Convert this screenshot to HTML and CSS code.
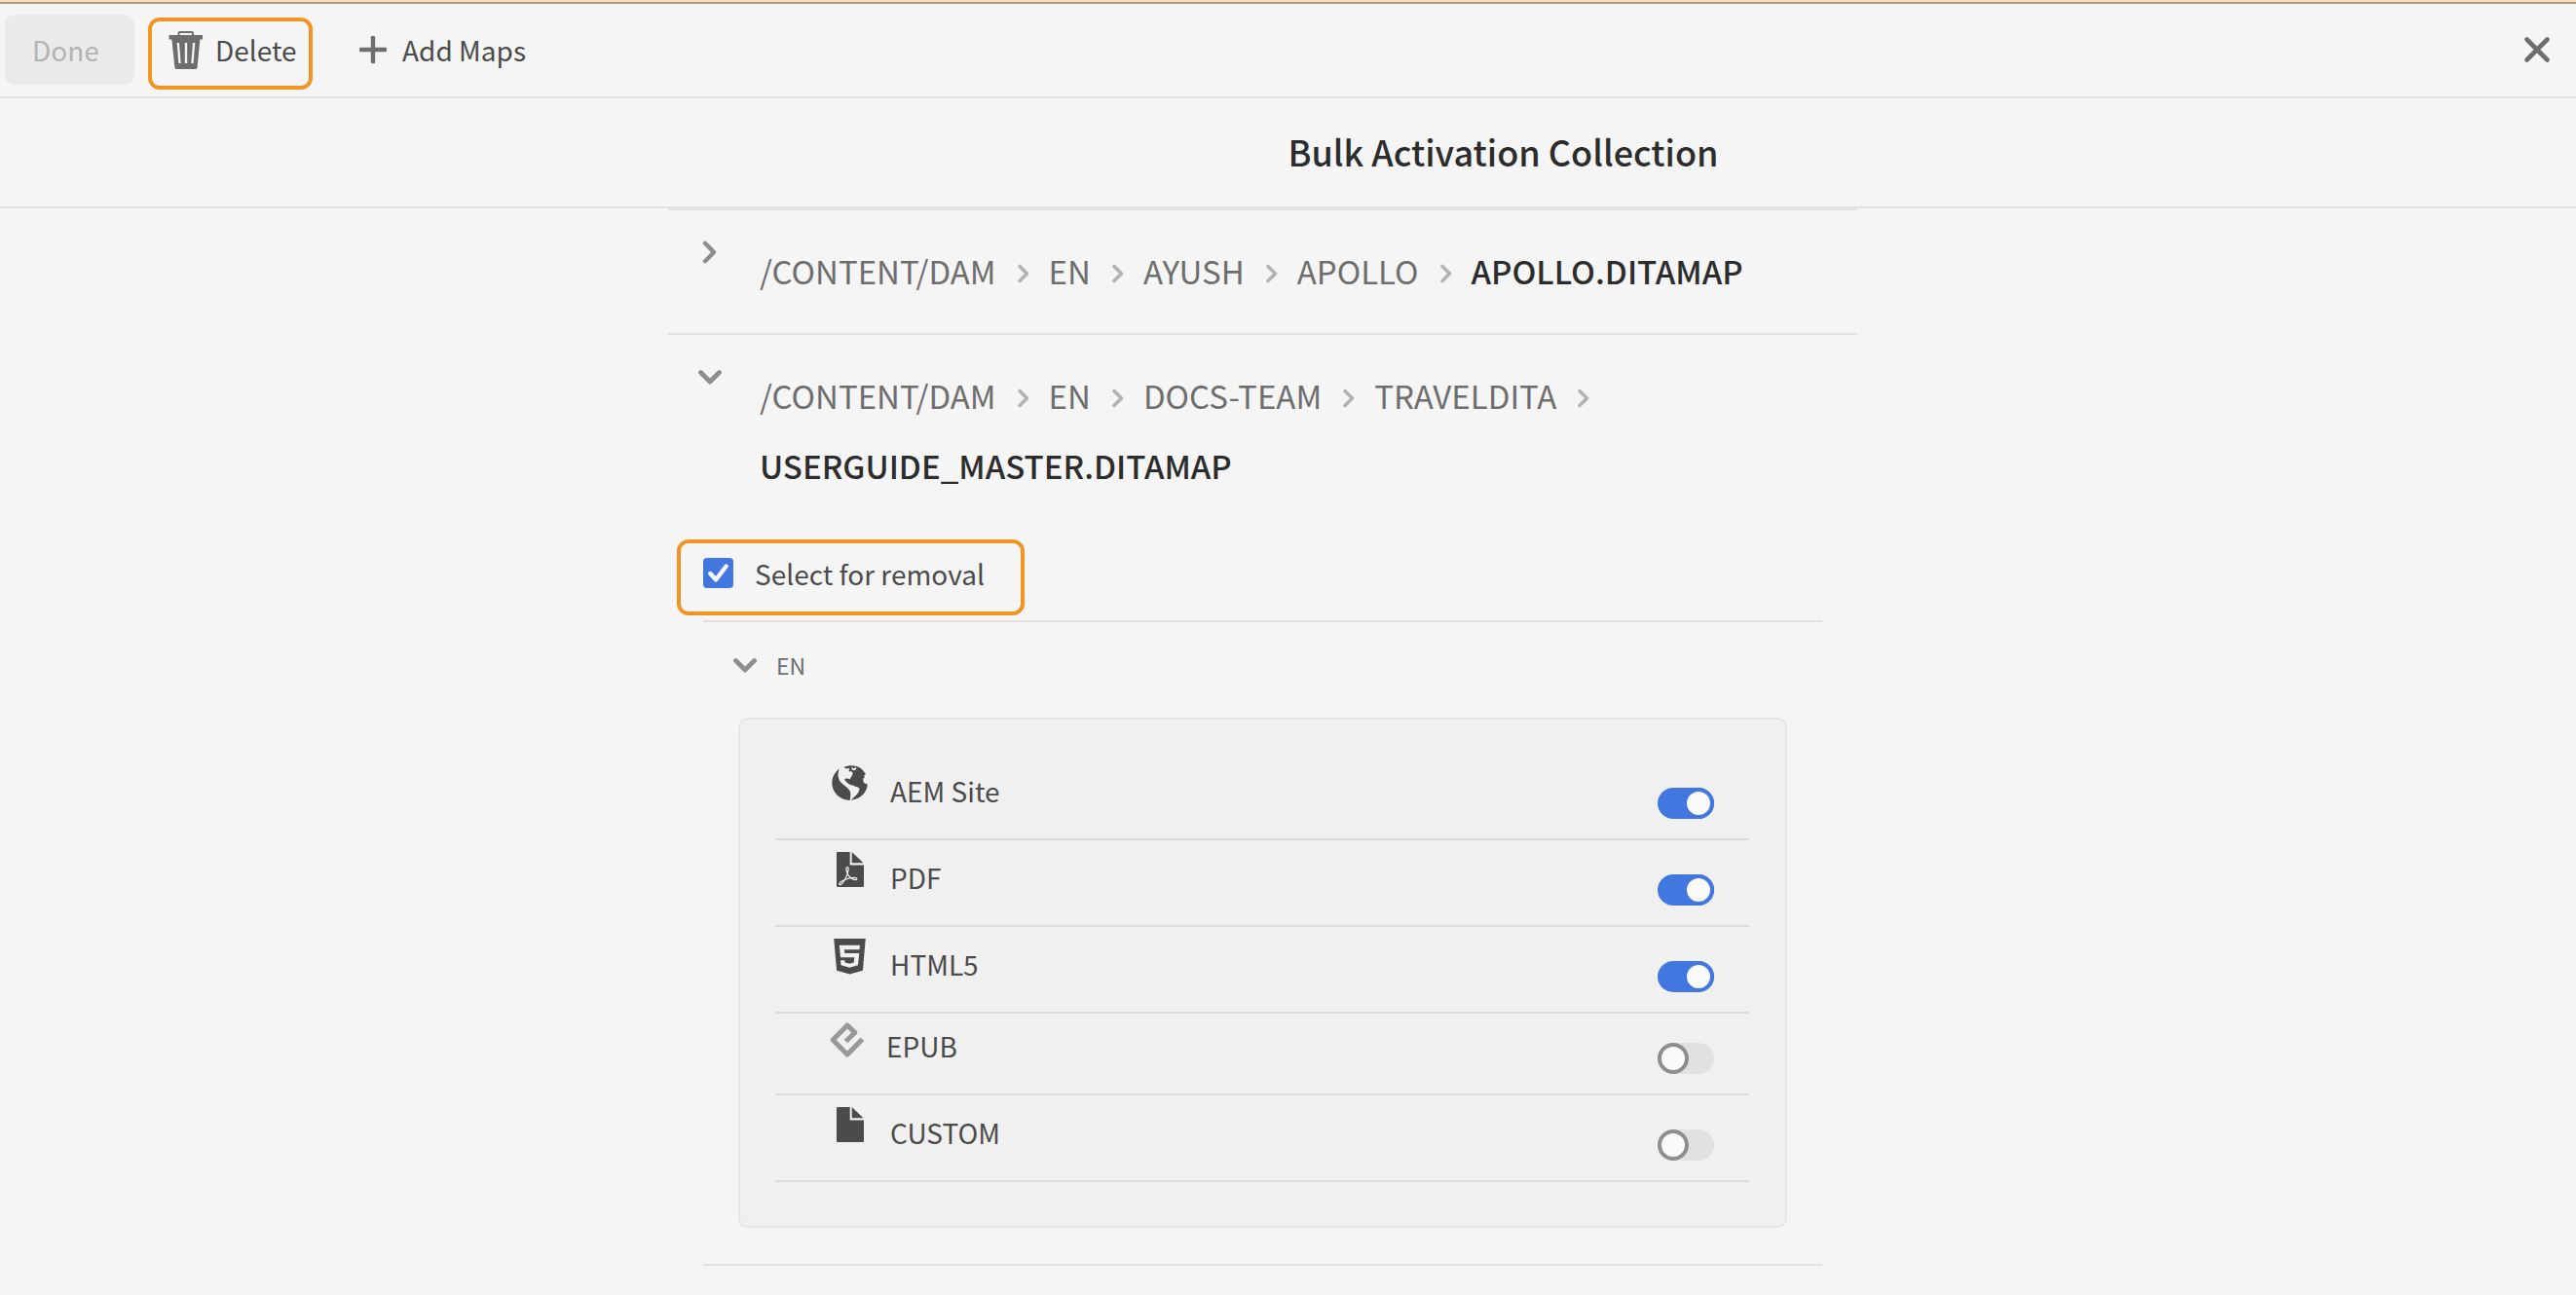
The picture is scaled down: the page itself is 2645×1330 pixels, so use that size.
FILE: index.html
```html
<!DOCTYPE html>
<html lang="en">
<head>
<meta charset="utf-8">
<title>Bulk Activation Collection</title>
<meta name="viewport" content="width=device-width, initial-scale=1">
<link rel="stylesheet" href="styles.css">
</head>
<body>
<svg class="sprite" aria-hidden="true">
  <symbol id="chevron-right" viewBox="0 0 24 24"><path d="M7 2.800L16 12L7 21.200" fill="none" stroke="currentColor" stroke-width="4.400" stroke-linecap="round" stroke-linejoin="round"/></symbol>
  <symbol id="chevron-down" viewBox="0 0 24 24"><path d="M2.500 7.500L12 17L21.500 7.500" fill="none" stroke="currentColor" stroke-width="4.800" stroke-linecap="round" stroke-linejoin="round"/></symbol>
  <symbol id="crumb-arrow" viewBox="0 0 12 20"><path d="M2 2.500L9.500 10L2 17.500" fill="none" stroke="currentColor" stroke-width="3.600" stroke-linecap="round" stroke-linejoin="round"/></symbol>
</svg>

<header class="toolbar">
  <button class="btn btn-done" type="button" disabled>Done</button>
  <button class="btn btn-delete" type="button">
    <svg class="icon-trash" viewBox="0 0 36 40" aria-hidden="true"><path d="M10.500 6V3.200Q10.500 2 11.700 2H23.800Q25 2 25 3.200V6" fill="none" stroke="currentColor" stroke-width="2"/><path fill="currentColor" fill-rule="evenodd" d="M0.500 5H35V9.500H32.400L29.600 38.200Q29.400 40 27.600 40H8.400Q6.600 40 6.400 38.200L3.400 9.500H0.500ZM8.700 13L10.400 34H12.700L11 13ZM16.800 13V34H19.200V13ZM25 13L23.300 34H25.600L27.300 13Z"/></svg>
    Delete
  </button>
  <button class="btn btn-add" type="button">
    <svg class="icon-plus" viewBox="0 0 28 28" aria-hidden="true"><path d="M14 1.500V26.500M1.500 14H26.500" stroke="currentColor" stroke-width="4.400" stroke-linecap="round"/></svg>
    Add Maps
  </button>
  <button class="btn btn-close" type="button" aria-label="Close">
    <svg class="icon-close" viewBox="0 0 28 28" aria-hidden="true"><path d="M3.500 3.500L24.500 24.500M24.500 3.500L3.500 24.500" stroke="currentColor" stroke-width="4.600" stroke-linecap="round"/></svg>
  </button>
</header>

<div class="titlebar"><h1>Bulk Activation Collection</h1></div>

<main class="page">
  <div class="maps">
    <section class="map">
      <div class="map-head">
        <button class="expander" type="button" aria-expanded="false" aria-label="Expand map"><svg viewBox="0 0 24 24"><use href="#chevron-right"/></svg></button>
        <ol class="crumbs">
          <li>/CONTENT/DAM<svg><use href="#crumb-arrow"/></svg></li>
          <li>EN<svg><use href="#crumb-arrow"/></svg></li>
          <li>AYUSH<svg><use href="#crumb-arrow"/></svg></li>
          <li>APOLLO<svg><use href="#crumb-arrow"/></svg></li>
          <li class="current">APOLLO.DITAMAP</li>
        </ol>
      </div>
    </section>

    <section class="map">
      <div class="map-head">
        <button class="expander" type="button" aria-expanded="true" aria-label="Collapse map"><svg viewBox="0 0 24 24"><use href="#chevron-down"/></svg></button>
        <ol class="crumbs">
          <li>/CONTENT/DAM<svg><use href="#crumb-arrow"/></svg></li>
          <li>EN<svg><use href="#crumb-arrow"/></svg></li>
          <li>DOCS-TEAM<svg><use href="#crumb-arrow"/></svg></li>
          <li>TRAVELDITA<svg><use href="#crumb-arrow"/></svg></li>
          <li class="current">USERGUIDE_MASTER.DITAMAP</li>
        </ol>
      </div>

      <label class="removal">
        <span class="tick">
          <input type="checkbox" checked>
          <svg viewBox="0 0 31 31" aria-hidden="true"><path d="M7.300 16L13 22.300L23.700 8.500" fill="none" stroke="currentColor" stroke-width="4.400" stroke-linecap="round" stroke-linejoin="round"/></svg>
        </span>
        Select for removal
      </label>

      <div class="language">
        <div class="language-head">
          <button class="expander" type="button" aria-expanded="true" aria-label="Collapse language"><svg viewBox="0 0 24 24"><use href="#chevron-down"/></svg></button>
          <h2>EN</h2>
        </div>
        <ul class="outputs">
          <li>
            <svg class="kind" viewBox="0 0 40 36" aria-hidden="true"><g fill="currentColor"><path d="M10 3.500C7.600 8.500 8 14.500 12.500 18.500C15 21 18.500 22.500 20.500 26C22 29 21.300 32.500 20.700 36C10.500 35.800 2.300 28 2.300 18.300C2.300 12 5.300 6.800 10 3.500Z"/><path d="M14.500 1.800C18 0.200 23 -0.400 27.500 1C31.500 2.200 34 4.500 35.500 7.300L37 8.700L35.300 10.500L35.800 12.500L34.500 13.200C34 15.500 34.600 17.800 36 18.800L38.700 19.200C38.400 27 32.500 34.500 22 35.800C24.500 32 30 30 30.500 23.800C29.200 22.200 27 21.800 25.200 21.500C24.500 20 22.500 20.500 21 20C19 18.800 16.200 17 15 14.300C16.600 12.800 19 13.800 20.700 14.400C21.300 11.800 23.700 10.500 23.500 8L22 5.800L20.500 6.800L19.400 5.300L20.600 3.500L18.500 3L16.800 3.600Z"/></g><path d="M22 1.800L24.500 3.300L27 1.800L27.300 4L25 5.200L23 4.800" fill="#f0f0f0"/></svg>
            <label for="out-site">AEM Site</label>
            <input class="switch" id="out-site" type="checkbox" role="switch" checked>
          </li>
          <li>
            <svg class="kind" viewBox="0 0 40 36" aria-hidden="true"><path fill="currentColor" d="M8 0H20.700V13.500H35V35Q35 36 34 36H8Q7 36 7 35V1Q7 0 8 0ZM22.700 0L34.500 11.300H22.700Z"/><path d="M18 15.500C16.500 15.500 16.800 19 18 22C19.500 25.500 23.500 28.800 26.500 28.600C28.800 28.300 28.300 26.600 25.500 26.400C20.500 26.300 14 28.500 11 31C8.500 33.200 10 34.600 12 33C15.500 30 18.800 22.500 19.200 18C19.300 16.300 19 15.500 18 15.500Z" fill="none" stroke="#f0f0f0" stroke-width="1.200"/></svg>
            <label for="out-pdf">PDF</label>
            <input class="switch" id="out-pdf" type="checkbox" role="switch" checked>
          </li>
          <li>
            <svg class="kind" viewBox="0 0 40 36" aria-hidden="true"><path fill="currentColor" d="M4.200 0H36.800L33.900 32.700L20.500 36.400L7.100 32.700Z"/><path d="M9.800 6.700H31L30.500 11.200H15L15.300 15H30.300L28.900 27.300L20.300 29.800L11.500 27.300L11 22.300H15.300L15.600 24.500L20.300 25.800L24.800 24.500L25.200 19.300H11Z" fill="#f0f0f0"/></svg>
            <label for="out-html">HTML5</label>
            <input class="switch" id="out-html" type="checkbox" role="switch" checked>
          </li>
          <li class="compact">
            <svg class="kind" viewBox="0 0 36 36" aria-hidden="true"><path d="M16.500 19.500L25.800 10.500L18 3L3.200 18L18 33L33.500 17.200" fill="none" stroke="currentColor" stroke-width="5.200" stroke-linejoin="round"/></svg>
            <label for="out-epub">EPUB</label>
            <input class="switch" id="out-epub" type="checkbox" role="switch">
          </li>
          <li>
            <svg class="kind" viewBox="0 0 40 36" aria-hidden="true"><path fill="currentColor" d="M8 0H20.700V13.500H35V35Q35 36 34 36H8Q7 36 7 35V1Q7 0 8 0ZM22.700 0L34.500 11.300H22.700Z"/></svg>
            <label for="out-custom">CUSTOM</label>
            <input class="switch" id="out-custom" type="checkbox" role="switch">
          </li>
        </ul>
      </div>
    </section>
  </div>
</main>
</body>
</html>
```
FILE: styles.css
```css
*, ::before { box-sizing: border-box; }

body {
  margin: 0;
  background: #f5f5f5;
  color: #4b4b4b;
  font-family: "Noto Sans CJK SC", "Noto Sans", sans-serif;
  font-size: 28px;
  line-height: 36px;
}

button, input { font: inherit; color: inherit; margin: 0; }
svg { display: block; flex: none; }
.sprite { position: absolute; width: 0; height: 0; }

/* Toolbar */
.toolbar {
  display: flex;
  align-items: flex-start;
  height: 101px;
  padding: 13px 26px 0 5px;
  border-top: 2px solid #fbdfba;
  border-bottom: 2px solid #e1e1e1;
  box-shadow: inset 0 2px #a99a84;
}

.btn {
  display: flex;
  align-items: center;
  height: 72px;
  padding: 0;
  border: 0;
  border-radius: 10px;
  background: none;
}
.btn svg { color: #6e6e6e; }
.btn-done { padding: 0 36px 0 28px; background: #eaeaea; color: #b3b3b3; width: 133px; }
.btn-delete {
  gap: 12px;
  width: 169px;
  height: 74px;
  margin: 3px 0 0 14px;
  padding: 0 0 8px 17px;
  border: 4px solid #f29423;
  border-radius: 12px;
}
.btn-add { gap: 16px; margin-left: 48px; }
.btn-close { margin-left: auto; }
.icon-trash { width: 36px; height: 40px; }
.icon-plus, .icon-close { width: 28px; height: 28px; }

/* Title */
.titlebar {
  padding: 35px 0 37px 50%;
  border-bottom: 2px solid #e1e1e1;
}
.titlebar h1 {
  margin: 0;
  color: #2c2c2c;
  font-size: 36px;
  font-weight: 500;
  line-height: 39px;
}

/* Map list */
.page { padding-right: 52px; }
.maps { max-width: 1221px; margin: 0 auto; }
.map { border-top: 2px solid #e1e1e1; }
.map-head {
  display: flex;
  align-items: flex-start;
  gap: 39px;
  padding: 26px 36px 28px 31px;
}
.expander {
  flex: none;
  padding: 0;
  border: 0;
  background: none;
  color: #8e8e8e;
}
.expander svg { width: 24px; height: 24px; }
.map-head .expander { margin-top: 5px; }

.crumbs {
  display: flex;
  flex-wrap: wrap;
  margin: 0;
  padding: 0;
  list-style: none;
  color: #6e6e6e;
  font-size: 33px;
  line-height: 72px;
}
.crumbs li { display: flex; align-items: center; }
.crumbs svg { width: 12px; height: 20px; margin: 6px 20px 0 22px; color: #b3b3b3; }
.crumbs .current { color: #2c2c2c; font-weight: 500; }

.removal {
  display: flex;
  align-items: center;
  gap: 22px;
  width: fit-content;
  height: 78px;
  margin: 12px 0 5px 9px;
  padding: 0 37px 9px 23px;
  border: 4px solid #f29423;
  border-radius: 12px;
}
.tick { display: grid; }
.tick > * { grid-area: 1 / 1; width: 31px; height: 31px; }
.tick input { appearance: none; border-radius: 4px; background: #4277e0; }
.tick svg { color: #fafafa; pointer-events: none; }

/* Language */
.language {
  margin: 0 36px;
  padding-bottom: 37px;
  border: solid #e1e1e1;
  border-width: 2px 0;
}
.language-head {
  display: flex;
  align-items: center;
  gap: 20px;
  height: 88px;
  margin-bottom: 10px;
  padding-left: 31px;
}
.language-head h2 {
  margin: 0;
  color: #6e6e6e;
  font-size: 23px;
  font-weight: 400;
}

.outputs {
  margin: 0 36px;
  padding: 35px 37px 45px 36px;
  border: 2px solid #e6e6e6;
  border-radius: 10px;
  background: #f0f0f0;
  list-style: none;
}
.outputs li {
  display: flex;
  align-items: flex-end;
  height: 89px;
  padding: 0 36px 20px 56px;
  border-bottom: 2px solid #dcdcdc;
}
.outputs .compact { height: 84px; }
.outputs label { margin: 0 auto 11px 22px; }
.kind { width: 40px; height: 36px; margin-bottom: 19px; overflow: visible; }
.compact .kind { width: 36px; margin-bottom: 17px; color: #999; }

.switch {
  appearance: none;
  display: flex;
  width: 58px;
  height: 32px;
  border-radius: 16px;
  background: #e1e1e1;
}
.switch::before {
  content: "";
  width: 32px;
  height: 32px;
  border: 4px solid #8e8e8e;
  border-radius: 50%;
  background: #fafafa;
}
.switch:checked { justify-content: flex-end; background: #4277e0; }
.switch:checked::before { border-color: #4277e0; }
```
